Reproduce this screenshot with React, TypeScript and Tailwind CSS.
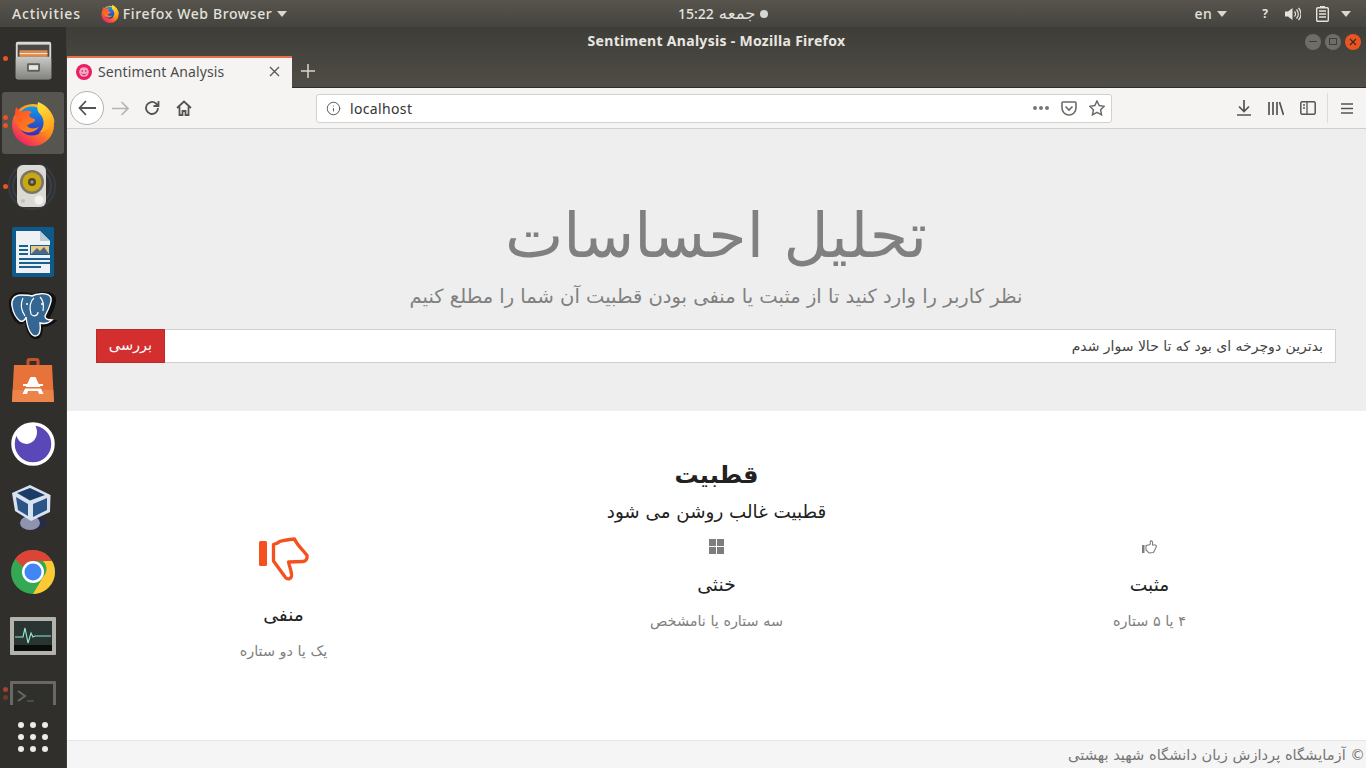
import React from "react";
import { Info } from "lucide-react";

const UI = { fontFamily: '"Noto Sans", "DejaVu Sans", sans-serif' };
const FA = { fontFamily: '"DejaVu Sans", "Noto Sans", sans-serif' };

function Caret({ className = "" }: { className?: string }) {
  return (
    <svg width="10" height="6" viewBox="0 0 10 6" className={className}>
      <path d="M0 0h10L5 6z" fill="#d8d6d0" />
    </svg>
  );
}

function FirefoxLogo({ size }: { size: number }) {
  return (
    <svg width={size} height={size} viewBox="0 0 44 44">
      <defs>
        <linearGradient id="ffa" x1="0.85" y1="0.05" x2="0.15" y2="0.95">
          <stop offset="0" stopColor="#ffcf1e" />
          <stop offset="0.45" stopColor="#ff8a18" />
          <stop offset="1" stopColor="#ee1a6a" />
        </linearGradient>
        <linearGradient id="ffb" x1="0.5" y1="0" x2="0.5" y2="1">
          <stop offset="0" stopColor="#0a9cf0" />
          <stop offset="1" stopColor="#3a2cb0" />
        </linearGradient>
        <linearGradient id="ffc" x1="0.3" y1="0" x2="0.6" y2="1">
          <stop offset="0" stopColor="#ffe23a" />
          <stop offset="1" stopColor="#ff9a1a" />
        </linearGradient>
        <linearGradient id="ffd" x1="0" y1="0" x2="0.8" y2="1">
          <stop offset="0" stopColor="#ff4a2a" />
          <stop offset="1" stopColor="#ff8a1a" />
        </linearGradient>
      </defs>
      <circle cx="22" cy="23" r="21" fill="url(#ffa)" />
      <circle cx="21" cy="19" r="14.500" fill="url(#ffb)" />
      <path d="M5 5l5 5c4-2 8-2 11 0-2 2-4 3-2 5 2 2 5 1 5 3 0 3-6 3-8 6 2 3 8 3 12 1-4 6-12 7-18 3C4 23 3 13 5 5z" fill="url(#ffd)" />
      <path d="M27 0c-1 6-1 9 2 12 5 5 5 13-1 19 7-2 13-6 15.500-11C43 12 36 3 27 0z" fill="url(#ffc)" />
    </svg>
  );
}

function Files() {
  return (
    <svg width="41" height="43" viewBox="0 0 44 44">
      <defs>
        <linearGradient id="fg" x1="0" y1="0" x2="0" y2="1">
          <stop offset="0" stopColor="#c9c9c6" />
          <stop offset="1" stopColor="#84847f" />
        </linearGradient>
      </defs>
      <rect x="3" y="2" width="38" height="40" rx="2" fill="#d9d9d6" />
      <rect x="5" y="5" width="34" height="14" fill="#4b4a47" />
      <rect x="7" y="11" width="30" height="7" fill="#dd8a4f" />
      <rect x="7" y="14" width="30" height="1.200" fill="#f7e2c4" />
      <rect x="3" y="18" width="38" height="24" rx="2" fill="url(#fg)" />
      <rect x="15" y="25" width="14" height="9" rx="1.500" fill="#5f5f5c" />
      <rect x="17" y="27" width="10" height="5" fill="#e6e6e4" />
    </svg>
  );
}

function Speaker() {
  return (
    <svg width="50" height="48" viewBox="0 0 50 48">
      <circle cx="24" cy="22" r="23" fill="none" stroke="#3d4a5a" strokeWidth="2.500" opacity="0.4" />
      <circle cx="24" cy="22" r="19" fill="none" stroke="#44566b" strokeWidth="2" opacity="0.45" />
      <rect x="9" y="1" width="29" height="42" rx="6" fill="#dcdad4" />
      <circle cx="24" cy="18" r="12" fill="#77756c" />
      <circle cx="24" cy="18" r="9.500" fill="#c9a812" />
      <circle cx="24" cy="18" r="4" fill="#4a4835" />
      <circle cx="24" cy="18" r="1.800" fill="#99926a" />
      <circle cx="31" cy="36" r="4.500" fill="#f2f1ec" />
      <circle cx="15" cy="37" r="2" fill="#c3c1ba" />
    </svg>
  );
}

function Writer() {
  return (
    <svg width="42" height="50" viewBox="0 0 42 50">
      <path d="M2 0h28l10 0a2 2 0 0 1 2 2v46a2 2 0 0 1-2 2H2a2 2 0 0 1-2-2V2a2 2 0 0 1 2-2z" fill="#0e5a8a" />
      <path d="M4 4h24l10 10v32H4z" fill="#eef2f5" />
      <path d="M28 4l10 10H28z" fill="#b9cad6" />
      <path d="M29 0h11a2 2 0 0 1 2 2v10z" fill="#0e5a8a" />
      <rect x="7" y="18" width="9" height="2" fill="#1b618f" />
      <rect x="7" y="22" width="9" height="2" fill="#1b618f" />
      <rect x="7" y="26" width="9" height="2" fill="#1b618f" />
      <rect x="7" y="31" width="31" height="2" fill="#1b618f" />
      <rect x="7" y="35" width="31" height="2" fill="#1b618f" />
      <rect x="7" y="39" width="22" height="2" fill="#1b618f" />
      <rect x="18" y="18" width="20" height="10" fill="#1b618f" />
      <rect x="19" y="19" width="18" height="8" fill="#e8c98a" />
      <path d="M19 27l6-6 3 3 4-4 5 7z" fill="#4c6a80" />
    </svg>
  );
}

function Elephant() {
  return (
    <svg width="48" height="48" viewBox="0 0 48 48">
      <path d="M12 1C4 1 0 7 1 14c1 7 4 14 9 17 3 1 5-1 7-3 0 8 3 17 9 18 6 1 7-6 7-12 4 0 9-1 13-5-3 0-6 0-7-2 3-6 8-14 7-20-1-5-7-7-14-6-3 0-6 1-8 2-3-1-6-2-12-2z" fill="#111" stroke="#111" strokeWidth="2" />
      <path d="M12 3C5 3 2 8 3 14c1 6 4 12 8 15 3 1 5-1 6-4 1 8 3 18 9 19 5 0 6-6 5-13 4 1 9 0 12-3-4 0-7-1-7-4 3-6 7-13 6-18-1-4-7-5-12-4-3 0-5 1-7 2-3-1-7-1-11-1z" fill="#336791" stroke="#fff" strokeWidth="1.400" />
      <path d="M14 6c-3 6-2 12 2 18M25 6c-4 3-5 10-3 16 2 3 7 2 7-2M31 5c3 3 4 8 3 14" fill="none" stroke="#fff" strokeWidth="1.200" />
      <circle cx="33" cy="12" r="1" fill="#fff" />
      <circle cx="18" cy="12" r="1" fill="#fff" />
    </svg>
  );
}

function Store() {
  return (
    <svg width="42" height="44" viewBox="0 0 42 44">
      <path d="M16 10V3a1.500 1.500 0 0 1 1.500-1.500h7A1.500 1.500 0 0 1 26 3v7" fill="none" stroke="#c5532a" strokeWidth="3" />
      <path d="M2 7h38l2 37H0z" fill="#e8733a" />
      <path d="M.7 32h40.600l.7 12H0z" fill="#ec8348" />
      <path d="M18.500 19h5l8 17h-4.500l-1-3H16l-1 3h-4.500z" fill="#fff" />
      <rect x="11" y="26" width="20" height="2" fill="#fff" />
      <rect x="12" y="29" width="18" height="1.500" fill="#e8733a" />
    </svg>
  );
}

function Eclipse() {
  return (
    <svg width="44" height="44" viewBox="0 0 44 44">
      <circle cx="22" cy="22" r="20" fill="#5a48b8" stroke="#fff" strokeWidth="3.500" />
      <path d="M5 12c2 8 6 9 10 10 6 0 11-5 11-12 0-3-1-5-2-7-8-1-15 3-19 9z" fill="#fff" />
    </svg>
  );
}

function VBox() {
  return (
    <svg width="42" height="46" viewBox="0 0 42 46">
      <ellipse cx="21" cy="38" rx="14" ry="7" fill="#1f2c58" opacity="0.6" />
      <ellipse cx="18" cy="38" rx="10" ry="7" fill="#8e94ad" />
      <path d="M18 0L0 8l3 18 16 10 19-9 .5-17z" fill="#d8e2f0" />
      <path d="M18 3l15 7-15 5.500L5 8z" fill="#1c3c68" />
      <path d="M4 12l12 7v12L6 25z" fill="#2b5586" />
      <path d="M21 19l14-6v12l-14 7z" fill="#2b5586" />
    </svg>
  );
}

function Chrome() {
  return (
    <svg width="44" height="44" viewBox="0 0 44 44">
      <circle cx="22" cy="22" r="22" fill="#34a853" />
      <path d="M22 0a22 22 0 0 1 19 11H22a11 11 0 0 0-10 6L4 9A22 22 0 0 1 22 0z" fill="#db4437" />
      <path d="M41 11a22 22 0 0 1-19 33l10-17a11 11 0 0 0 0-16z" fill="#fcc934" />
      <circle cx="22" cy="22" r="11" fill="#fff" />
      <circle cx="22" cy="22" r="8.500" fill="#4285f4" />
    </svg>
  );
}

function Monitor() {
  return (
    <svg width="46" height="38" viewBox="0 0 46 38">
      <rect x="0" y="0" width="46" height="38" rx="1" fill="#b3b3ae" />
      <rect x="4" y="4" width="38" height="30" fill="#2a3533" />
      <rect x="4" y="28" width="38" height="6" fill="#0b0d0d" />
      <path d="M5 20h8l2-9 3 15 3-10 2 4 2-1h16" fill="none" stroke="#8fe8c9" strokeWidth="1.200" />
    </svg>
  );
}

function Terminal() {
  return (
    <svg width="46" height="38" viewBox="0 0 46 38" className="opacity-60">
      <rect x="0" y="0" width="46" height="38" rx="1" fill="#8f8f8a" />
      <rect x="3" y="3" width="40" height="32" fill="#2f2f2c" />
      <path d="M8 10l7 5-7 5" fill="none" stroke="#8d8d88" strokeWidth="2" />
      <path d="M17 20h7" stroke="#6d6d68" strokeWidth="1.500" />
    </svg>
  );
}

function Dot({ className = "bg-[#e95420]" }: { className?: string }) {
  return <span className={`block w-[5px] h-[5px] rounded-full ${className}`} />;
}

function DockItem({ children, marks, active = false }: { children: React.ReactNode; marks?: React.ReactNode; active?: boolean }) {
  return (
    <div className="relative h-[64px] w-full shrink-0 flex items-center justify-center">
      {active && <div className="absolute left-[2px] top-[0px] w-[62px] h-[62px] rounded-[3px] bg-[#575550]" />}
      <div className="relative flex items-center justify-center">{children}</div>
      {marks}
    </div>
  );
}

function Dock() {
  return (
    <aside className="w-[67px] shrink-0 bg-[#302f2c] flex flex-col border-r border-[#3e3d39]">
      <div className="flex-1 overflow-hidden flex flex-col pt-[1px] min-h-0">
        <DockItem marks={<div className="absolute left-[3px] top-[28px]"><Dot /></div>}><Files /></DockItem>
        <DockItem active marks={<div className="absolute left-[3px] top-[23px] flex flex-col gap-[3px]"><Dot /><Dot /></div>}><FirefoxLogo size={44} /></DockItem>
        <DockItem marks={<div className="absolute left-[3px] top-[28px]"><Dot /></div>}><Speaker /></DockItem>
        <DockItem><Writer /></DockItem>
        <DockItem><Elephant /></DockItem>
        <DockItem><Store /></DockItem>
        <DockItem><Eclipse /></DockItem>
        <DockItem><VBox /></DockItem>
        <DockItem><Chrome /></DockItem>
        <DockItem><Monitor /></DockItem>
        <DockItem marks={<div className="absolute left-[3px] top-[19px] flex flex-col gap-[3px]"><Dot className="bg-[#a5432a]" /><Dot className="bg-[#6d3a2a]" /></div>}><Terminal /></DockItem>
      </div>
      <div className="h-[63px] shrink-0 flex items-center justify-center">
        <div className="grid grid-cols-3 gap-x-[6px] gap-y-[6px]">
          {Array.from({ length: 9 }).map((_, i) => (
            <span key={i} className="block w-[6px] h-[6px] rounded-full bg-[#ecebe8]" />
          ))}
        </div>
      </div>
    </aside>
  );
}

function TopBar() {
  return (
    <header className="h-[27px] shrink-0 bg-gradient-to-b from-[#57544d] to-[#46443f] grid grid-cols-[678px_auto_1fr] items-center text-[#e4e2dc] text-[14px] font-medium" style={UI}>
      <div className="flex items-center pl-[12px]">
        <span className="tracking-[0.85px]">Activities</span>
        <span className="ml-[20px]"><FirefoxLogo size={18} /></span>
        <span className="ml-[4px] tracking-[0.62px]">Firefox Web Browser</span>
        <Caret className="ml-[5px]" />
      </div>
      <div className="flex items-center text-[14px]">
        <span>15:22</span>
        <span className="ml-[5px] text-[16.500px] leading-[20px]" dir="rtl" style={FA}>جمعه</span>
        <span className="ml-[5px] w-[8px] h-[8px] rounded-full bg-[#d8d6d0]" />
      </div>
      <div className="flex items-center justify-end pr-[15px]">
        <span className="tracking-[0.5px]">en</span>
        <Caret className="ml-[5px]" />
        <span className="ml-[35px] text-[12px] font-bold">?</span>
        <svg className="ml-[17px]" width="16" height="14" viewBox="0 0 16 14">
          <path d="M0 4.500h3L7.500 1v12L3 9.500H0z" fill="#e4e2dc" />
          <path d="M9.500 4.500a3.500 3.500 0 0 1 0 5M11.500 2.500a6.500 6.500 0 0 1 0 9M13.500 1a8.500 8.500 0 0 1 0 12" fill="none" stroke="#e4e2dc" strokeWidth="1.200" />
        </svg>
        <svg className="ml-[15px]" width="13" height="16" viewBox="0 0 13 16">
          <rect x="4" y="0" width="5" height="2" fill="#e4e2dc" />
          <rect x="0.700" y="1.700" width="11.600" height="13.600" rx="1" fill="none" stroke="#e4e2dc" strokeWidth="1.400" />
          <path d="M3 5h7M3 8h7M3 11h7" stroke="#e4e2dc" strokeWidth="1.500" />
        </svg>
        <Caret className="ml-[12px]" />
      </div>
    </header>
  );
}

function TitleBar() {
  return (
    <div className="h-[29px] shrink-0 grid grid-cols-[1fr_auto_1fr] items-center text-[#e8e6e1] text-[14px] font-bold tracking-[0.3px] pb-[2px]" style={UI}>
      <div />
      <span>Sentiment Analysis - Mozilla Firefox</span>
      <div className="flex justify-end items-center gap-[4px] pr-[5px] pt-[2px]">
        <span className="w-[16px] h-[16px] rounded-full bg-[#6f6d67] flex items-center justify-center"><span className="block w-[8px] h-[1px] bg-[#3e3d39]" /></span>
        <span className="w-[16px] h-[16px] rounded-full bg-[#6f6d67] flex items-center justify-center"><span className="block w-[8px] h-[7px] border border-[#3e3d39]" /></span>
        <span className="w-[16px] h-[16px] rounded-full bg-[#e95420] flex items-center justify-center">
          <svg width="8" height="8" viewBox="0 0 8 8"><path d="M1 1l6 6M7 1l-6 6" stroke="#3e2a20" strokeWidth="1.200" /></svg>
        </span>
      </div>
    </div>
  );
}

function TabBar() {
  return (
    <div className="h-[32px] shrink-0 flex items-stretch border-b border-[#2e2d2a]" style={UI}>
      <div className="w-[225px] bg-[#f5f4f2] border-t-[2px] border-[#e9704a] flex items-center pl-[9px] pr-[12px] pb-[3px] -mb-[1px] z-10">
        <svg width="16" height="16" viewBox="0 0 16 16">
          <circle cx="8" cy="8" r="8" fill="#e91e63" />
          <circle cx="8" cy="8" r="4.800" fill="#f8a8c4" />
          <circle cx="6.300" cy="7" r="0.800" fill="#c2185b" />
          <circle cx="9.700" cy="7" r="0.800" fill="#c2185b" />
          <path d="M5.800 9.500a2.500 2.500 0 0 0 4.400 0" fill="none" stroke="#c2185b" />
        </svg>
        <span className="ml-[6px] text-[14px] tracking-[0.1px] text-[#4c4c4c] flex-1">Sentiment Analysis</span>
        <svg width="11" height="11" viewBox="0 0 11 11"><path d="M1 1l9 9M10 1l-9 9" stroke="#5a5a58" strokeWidth="1.400" /></svg>
      </div>
      <div className="w-[32px] flex items-center justify-center pb-[1px]">
        <svg width="14" height="14" viewBox="0 0 14 14"><path d="M7 0v14M0 7h14" stroke="#d6d4ce" strokeWidth="1.500" /></svg>
      </div>
    </div>
  );
}

function Toolbar() {
  const c = "#545452";
  return (
    <div className="h-[41px] shrink-0 bg-[#f5f4f2] border-b border-[#cfcecb] flex items-center pl-[3px] pr-[13px]" style={UI}>
      <div className="w-[34px] h-[34px] rounded-full border border-[#b1b1b0] bg-white flex items-center justify-center">
        <svg width="18" height="16" viewBox="0 0 18 16"><path d="M8 1L1.500 8 8 15M2 8h16" fill="none" stroke={c} strokeWidth="1.800" /></svg>
      </div>
      <svg className="ml-[8px]" width="17" height="15" viewBox="0 0 17 15"><path d="M9.500 1l6.500 6.500L9.500 14M16 7.500H0" fill="none" stroke="#b4b4b2" strokeWidth="1.700" /></svg>
      <svg className="ml-[15px]" width="16" height="16" viewBox="0 0 16 16"><path d="M14 8a6 6 0 1 1-2-4.500L14 5.500M14.500 1v5h-5" fill="none" stroke={c} strokeWidth="1.800" /></svg>
      <svg className="ml-[16px]" width="16" height="16" viewBox="0 0 16 16"><path d="M1 8l7-6.500L15 8M3.500 6.500V15h3v-4h3v4h3V6.500" fill="none" stroke={c} strokeWidth="1.800" /></svg>
      <div className="ml-[124px] w-[796px] h-[29px] bg-white rounded-[3px] border border-[#d2d1ce] flex items-center pl-[9px] pr-[6px]">
        <Info size={15} color="#5c5c5a" strokeWidth={1.600} />
        <span className="ml-[9px] text-[14px] tracking-[0.35px] text-[#333] flex-1">localhost</span>
        <span className="flex gap-[2px] mr-[12px]">
          <i className="block w-[4px] h-[4px] rounded-full bg-[#77777a]" />
          <i className="block w-[4px] h-[4px] rounded-full bg-[#77777a]" />
          <i className="block w-[4px] h-[4px] rounded-full bg-[#77777a]" />
        </span>
        <svg width="16" height="15" viewBox="0 0 16 15"><path d="M1 2a1 1 0 0 1 1-1h12a1 1 0 0 1 1 1v5a7 7 0 0 1-14 0z M4.500 5.500L8 9l3.500-3.500" fill="none" stroke="#6a6a68" strokeWidth="1.600" /></svg>
        <svg className="ml-[12px]" width="16" height="16" viewBox="0 0 16 16"><path d="M8 1l2.200 4.600 5 .7-3.600 3.500.9 5L8 12.400l-4.500 2.400.9-5L.8 6.300l5-.7z" fill="none" stroke="#6a6a68" strokeWidth="1.500" /></svg>
      </div>
      <div className="flex-1" />
      <svg width="14" height="16" viewBox="0 0 14 16"><path d="M7 0v11M2 6.500L7 11.500l5-5M0 15h14" fill="none" stroke={c} strokeWidth="1.700" /></svg>
      <svg className="ml-[17px]" width="16" height="15" viewBox="0 0 16 15"><path d="M1 1v13M5 1v13M9 1v13M11.500 1l4 13" fill="none" stroke={c} strokeWidth="1.700" /></svg>
      <svg className="ml-[16px]" width="16" height="14" viewBox="0 0 16 14"><rect x="0.800" y="0.800" width="14.400" height="12.400" rx="1.500" fill="none" stroke={c} strokeWidth="1.500" /><path d="M7 1v12M3 4h2M3 7h2" stroke={c} strokeWidth="1.300" /></svg>
      <div className="ml-[11px] w-px h-[30px] bg-[#dcdbd8]" />
      <svg className="ml-[13px]" width="12" height="11" viewBox="0 0 12 11"><path d="M0 1h12M0 5.500h12M0 10h12" stroke={c} strokeWidth="1.600" /></svg>
    </div>
  );
}

function ThumbDown() {
  return (
    <svg width="50" height="47" viewBox="0 0 50 47" className="block ml-[1px]">
      <rect x="0" y="4" width="8" height="25" rx="1.500" fill="#f4511e" />
      <path d="M14.500 7.500c3-1 4-1 6-3 5-1 10-2.500 15-2.500 3 7 9 11 12.500 16.500 .5 3-1 6-4 6l-14.500 .500c1 5 3.500 10 3 14-.5 3-4 4-6 1.500L14.500 24z" fill="none" stroke="#f4511e" strokeWidth="3.300" strokeLinejoin="round" />
    </svg>
  );
}

function ThumbUp() {
  return (
    <svg width="15" height="14" viewBox="0 0 15 14" className="block">
      <rect x="0" y="5" width="2.500" height="8" fill="#7d7d7d" />
      <path d="M4 5.500L8 4.500 8.500 1c1.500-.5 2.500.5 2 4h3c1 .5 1 1.500.5 2.500L11.500 12.500 7 13 4 10z" fill="none" stroke="#7d7d7d" strokeWidth="1.100" />
    </svg>
  );
}

function Feature({ icon, title, text }: { icon: React.ReactNode; title: string; text: string }) {
  return (
    <div className="flex flex-col items-center">
      {icon}
      <h4 dir="rtl" className="mt-[19px] text-[18.700px] leading-[24px] text-[#222] font-normal">{title}</h4>
      <p dir="rtl" className="mt-[12px] text-[14.400px] leading-[24px] text-[#808080]">{text}</p>
    </div>
  );
}

function Page() {
  return (
    <main className="flex-1 min-h-0 flex flex-col bg-white" style={FA}>
      <section className="h-[282px] shrink-0 bg-[#eeeeee] flex flex-col items-center pt-[67px] pl-[29px] pr-[30px]">
        <h1 dir="rtl" className="text-[62px] leading-[80px] text-[#808080] font-normal">تحلیل احساسات</h1>
        <p dir="rtl" className="mt-[6px] text-[19.500px] leading-[30px] text-[#808080]">نظر کاربر را وارد کنید تا از مثبت یا منفی بودن قطبیت آن شما را مطلع کنیم</p>
        <div className="mt-[17px] w-full h-[34px] flex">
          <div className="w-[69px] bg-[#d32f2f] border border-[#b92a2a] text-white text-[14.500px] flex items-center justify-center" dir="rtl">بررسی</div>
          <div dir="rtl" className="flex-1 bg-white border border-l-0 border-[#cfcfcf] flex items-center pr-[12px] text-[14px] text-[#444]">بدترین دوچرخه ای بود که تا حالا سوار شدم</div>
        </div>
      </section>
      <section className="flex-1 min-h-0 flex flex-col items-center pt-[48px]">
        <h2 dir="rtl" className="text-[24px] leading-[32px] font-bold text-[#222]">قطبیت</h2>
        <p dir="rtl" className="mt-[7px] text-[18.300px] leading-[28px] text-[#222]">قطبیت غالب روشن می شود</p>
        <div className="mt-[11px] w-full grid grid-cols-3">
          <div className="flex justify-center">
            <Feature icon={<ThumbDown />} title="منفی" text="یک یا دو ستاره" />
          </div>
          <div className="flex justify-center pt-[2px]">
            <Feature icon={<svg width="15" height="15" viewBox="0 0 15 15" className="block"><path d="M0 0h7v7H0zM8 0h7v7H8zM0 8h7v7H0zM8 8h7v7H8z" fill="#7d7d7d" /></svg>} title="خنثی" text="سه ستاره یا نامشخص" />
          </div>
          <div className="flex justify-center pt-[2px]">
            <div className="flex flex-col items-center pt-[1px]">
              <Feature icon={<ThumbUp />} title="مثبت" text="۴ یا ۵ ستاره" />
            </div>
          </div>
        </div>
      </section>
      <footer dir="rtl" className="h-[28px] shrink-0 bg-[#f5f5f5] border-t border-[#e6e6e6] flex items-center pr-[1px] text-[14.650px] text-[#757575]">© آزمایشگاه پردازش زبان دانشگاه شهید بهشتی</footer>
    </main>
  );
}

export default function App() {
  return (
    <div className="w-[1366px] h-[768px] overflow-hidden flex flex-col bg-[#302f2c]">
      <TopBar />
      <div className="flex-1 min-h-0 flex">
        <Dock />
        <div className="flex-1 min-w-0 flex flex-col bg-gradient-to-b from-[#3e3d38] to-[#504d46] [background-size:100%_61px] bg-no-repeat">
          <TitleBar />
          <TabBar />
          <Toolbar />
          <Page />
        </div>
      </div>
    </div>
  );
}
